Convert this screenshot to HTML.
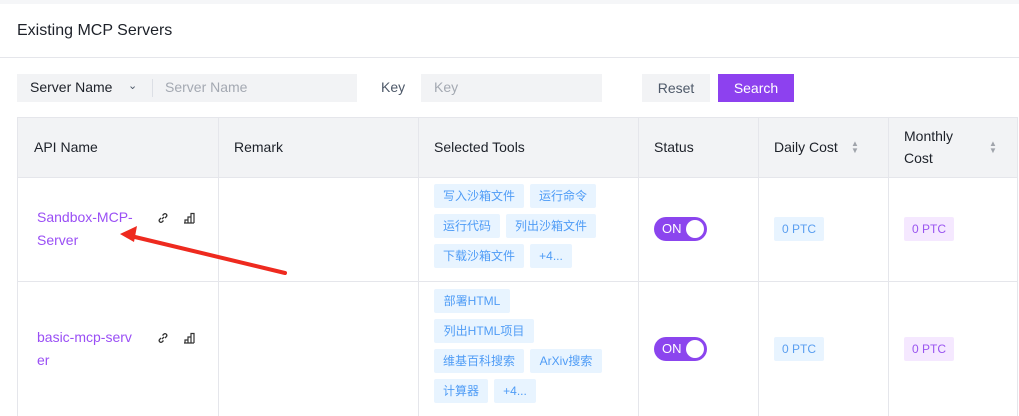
<!DOCTYPE html><html><head><meta charset="utf-8"><style>
*{box-sizing:border-box;margin:0;padding:0}
body{width:1019px;height:416px;overflow:hidden;background:#fff;font-family:"Liberation Sans","Noto Sans CJK SC",sans-serif;font-size:14px;color:#1d2129;position:relative}
.a{position:absolute}
.tag{position:absolute;height:24px;line-height:24px;background:#e8f4ff;color:#4f9cf6;font-size:12px;border-radius:2px;white-space:nowrap;text-align:center}
.vl{position:absolute;width:1px;background:#e5e6eb;top:117px;height:299px}
.tog{position:absolute;width:53px;height:24px;border-radius:12px;background:#8b45ee;color:#fff;font-size:13px;line-height:24px;padding-left:8px}
.tog i{position:absolute;right:3px;top:3px;width:18px;height:18px;border-radius:50%;background:#fff}
.name{position:absolute;left:37px;color:#9a4ff5;font-size:14px;line-height:23px}
.sort{position:absolute;font-size:8px;color:#a0a4ab;line-height:7px}
</style></head><body>
<div class="a" style="left:0;top:0;width:1019px;height:4px;background:#f5f6f8"></div>
<div class="a" style="left:17px;top:22px;font-size:16px">Existing MCP Servers</div>
<div class="a" style="left:0;top:57px;width:1019px;height:1px;background:#e5e6eb"></div>
<div class="a" style="left:17px;top:74px;width:340px;height:28px;background:#f2f3f5"></div>
<div class="a" style="left:152px;top:79px;width:1px;height:18px;background:#dcdfe5"></div>
<div class="a" style="left:30px;top:79px">Server Name</div>
<div class="a" style="left:128px;top:79px;font-size:11px;color:#4e5969">&#8964;</div>
<div class="a" style="left:165px;top:79px;color:#a4a9b2">Server Name</div>
<div class="a" style="left:381px;top:79px;color:#4e5969">Key</div>
<div class="a" style="left:421px;top:74px;width:181px;height:28px;background:#f2f3f5"></div>
<div class="a" style="left:434px;top:79px;color:#a4a9b2">Key</div>
<div class="a" style="left:642px;top:74px;width:68px;height:28px;background:#f2f3f5;color:#4e5969;text-align:center;line-height:28px">Reset</div>
<div class="a" style="left:718px;top:74px;width:76px;height:28px;background:#8d41ef;color:#fff;text-align:center;line-height:28px">Search</div>
<div class="a" style="left:17px;top:117px;width:1001px;height:60px;background:#f2f3f5;border:1px solid #e5e6eb;border-bottom:none"></div>
<div class="vl" style="left:17px"></div><div class="vl" style="left:218px"></div><div class="vl" style="left:418px"></div><div class="vl" style="left:638px"></div><div class="vl" style="left:758px"></div><div class="vl" style="left:888px"></div><div class="vl" style="left:1017px"></div>
<div class="a" style="left:17px;top:177px;width:1001px;height:1px;background:#e5e6eb"></div>
<div class="a" style="left:17px;top:281px;width:1001px;height:1px;background:#e5e6eb"></div>
<div class="a" style="left:34px;top:139px">API Name</div>
<div class="a" style="left:234px;top:139px">Remark</div>
<div class="a" style="left:434px;top:139px">Selected Tools</div>
<div class="a" style="left:654px;top:139px">Status</div>
<div class="a" style="left:774px;top:139px">Daily Cost</div>
<div class="sort" style="left:851px;top:140px">▲<br>▼</div>
<div class="a" style="left:904px;top:125px;line-height:22px">Monthly<br>Cost</div>
<div class="sort" style="left:989px;top:140px">▲<br>▼</div>

<div class="name" style="top:206px">Sandbox-MCP-<br>Server</div>
<div class="name" style="top:326px">basic-mcp-serv<br>er</div>
<svg class="a" style="left:157px;top:212px" width="12" height="12" viewBox="0 0 12 12" fill="none" stroke="#333" stroke-width="1.3"><path d="M5 7l2-2M4 6L2.5 7.5a1.8 1.8 0 002.5 2.5L6.5 8.5M8 6l1.5-1.5a1.8 1.8 0 00-2.5-2.5L5.5 3.5"/></svg>
<svg class="a" style="left:183px;top:212px" width="12" height="12" viewBox="0 0 12 12" fill="none" stroke="#333" stroke-width="1.2"><path d="M1 11h10M2 11V8h3v3M5 11V5h3v6M8 11V1.5h3V11"/></svg>
<svg class="a" style="left:157px;top:332px" width="12" height="12" viewBox="0 0 12 12" fill="none" stroke="#333" stroke-width="1.3"><path d="M5 7l2-2M4 6L2.5 7.5a1.8 1.8 0 002.5 2.5L6.5 8.5M8 6l1.5-1.5a1.8 1.8 0 00-2.5-2.5L5.5 3.5"/></svg>
<svg class="a" style="left:183px;top:332px" width="12" height="12" viewBox="0 0 12 12" fill="none" stroke="#333" stroke-width="1.2"><path d="M1 11h10M2 11V8h3v3M5 11V5h3v6M8 11V1.5h3V11"/></svg>

<div class="tag" style="left:434px;top:184px;width:90px">写入沙箱文件</div>
<div class="tag" style="left:530px;top:184px;width:66px">运行命令</div>
<div class="tag" style="left:434px;top:214px;width:66px">运行代码</div>
<div class="tag" style="left:506px;top:214px;width:90px">列出沙箱文件</div>
<div class="tag" style="left:434px;top:244px;width:90px">下载沙箱文件</div>
<div class="tag" style="left:530px;top:244px;width:42px">+4...</div>
<div class="tag" style="left:434px;top:289px;width:76px">部署HTML</div>
<div class="tag" style="left:434px;top:319px;width:100px">列出HTML项目</div>
<div class="tag" style="left:434px;top:349px;width:90px">维基百科搜索</div>
<div class="tag" style="left:530px;top:349px;width:72px">ArXiv搜索</div>
<div class="tag" style="left:434px;top:379px;width:54px">计算器</div>
<div class="tag" style="left:494px;top:379px;width:42px">+4...</div>

<div class="tog" style="left:654px;top:217px">ON<i></i></div>
<div class="tog" style="left:654px;top:337px">ON<i></i></div>
<div class="tag" style="left:774px;top:217px;width:50px;color:#5a9ef0">0 PTC</div>
<div class="tag" style="left:774px;top:337px;width:50px;color:#5a9ef0">0 PTC</div>
<div class="tag" style="left:904px;top:217px;width:50px;background:#f5e8ff;color:#9a55f0">0 PTC</div>
<div class="tag" style="left:904px;top:337px;width:50px;background:#f5e8ff;color:#9a55f0">0 PTC</div>

<svg class="a" style="left:0;top:0" width="1019" height="416"><line x1="285" y1="273" x2="135" y2="237" stroke="#ee2a1f" stroke-width="4" stroke-linecap="round"/><path d="M120 234l17-8-3 16z" fill="#ee2a1f"/></svg>
</body></html>
